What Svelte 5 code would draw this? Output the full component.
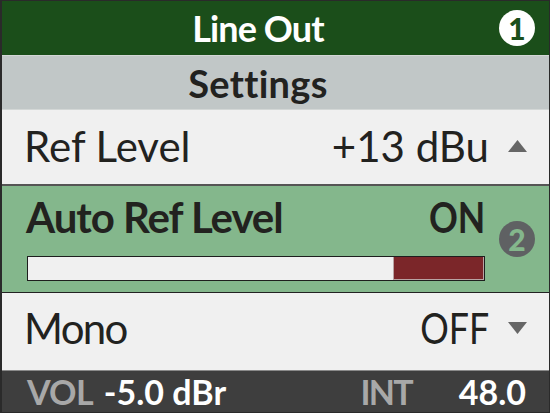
<script>
  const meterFill = 20;
</script>

<div class="screen">
  <header class="title">
    <span class="centered">Line Out</span>
    <span class="badge one">1</span>
  </header>
  <div class="section"><span class="centered">Settings</span></div>
  <div class="row plain first">
    <span>Ref Level</span>
    <span class="value">+13 dBu</span>
    <svg class="arrow" viewBox="0 0 19 12"><path d="M9.5 0 19 12H0z" /></svg>
  </div>
  <div class="row active">
    <div class="active-body">
      <div class="active-line">
        <span class="auto">Auto Ref Level</span>
        <span class="narrow">ON</span>
      </div>
      <div class="meter"><div class="fill" style="width:{meterFill}%"></div></div>
    </div>
    <span class="badge two">2</span>
  </div>
  <div class="row plain last">
    <span class="mono">Mono</span>
    <span class="value narrow">OFF</span>
    <svg class="arrow" viewBox="0 0 19 12"><path d="M0 0H19L9.5 12z" /></svg>
  </div>
  <footer class="status">
    <span class="label vol-label">VOL</span>
    <span class="num vol">-5.0 dBr</span>
    <span class="label int">INT</span>
    <span class="num">48.0</span>
  </footer>
</div>

<style>
  :global(body) {
    margin: 0;
    background: #232323;
  }
  .screen {
    box-sizing: border-box;
    width: 550px;
    height: 413px;
    padding: 1px 1px 2px 2px;
    display: flex;
    flex-direction: column;
    background: #2a2a2a;
    font-family: "Lato", "Open Sans", sans-serif;
    color: #22221f;
  }
  .title {
    height: 54px;
    flex: none;
    display: flex;
    align-items: center;
    position: relative;
    background: #1b4e1a;
    color: #fff;
    font-size: 36px;
    font-weight: 700;
    letter-spacing: -0.9px;
  }
  .centered {
    width: 512px;
    text-align: center;
  }
  .badge {
    position: absolute;
    width: 36px;
    height: 36px;
    border-radius: 50%;
    display: flex;
    align-items: center;
    justify-content: center;
    font-size: 30px;
    font-weight: 900;
    letter-spacing: 0;
  }
  .one {
    top: 9px;
    right: 14px;
    background: #fff;
    color: #1b4e1a;
  }
  .section {
    height: 55px;
    flex: none;
    box-sizing: border-box;
    border-top: 1px solid #d3d7d6;
    border-bottom: 1px solid #d3d7d6;
    display: flex;
    align-items: center;
    background: #c1c7c7;
    font-size: 38px;
    font-weight: 700;
    letter-spacing: 0.3px;
  }
  .row {
    flex: none;
    display: flex;
    align-items: center;
    box-sizing: border-box;
    padding-left: 22px;
    background: #f0f0f0;
    font-size: 42px;
  }
  .row .value {
    margin-left: auto;
    margin-right: 19px;
  }
  .narrow {
    display: inline-block;
    transform: scaleX(0.85);
    transform-origin: right center;
  }
  .auto {
    letter-spacing: -1.05px;
    margin-left: 2px;
  }
  .mono {
    letter-spacing: -1.7px;
  }
  .arrow {
    width: 19px;
    height: 12px;
    margin-right: 22px;
    fill: #666;
  }
  .first {
    height: 76px;
    border-bottom: 2px solid #555;
    padding-bottom: 3px;
  }
  .last {
    height: 79px;
    border-top: 1px solid #222;
    border-bottom: 1px solid #8a8a8a;
    padding-bottom: 7px;
  }
  .active {
    height: 106px;
    position: relative;
    background: #84b78c;
    font-weight: 700;
    align-items: flex-start;
  }
  .active-body {
    width: 461px;
  }
  .active-line {
    display: flex;
    justify-content: space-between;
    height: 62px;
    align-items: center;
  }
  .meter {
    box-sizing: border-box;
    height: 25px;
    margin-left: 3px;
    margin-top: 8px;
    border: 1px solid #1e1e1e;
    background: #f0f0f0;
    display: flex;
    justify-content: flex-end;
  }
  .fill {
    box-sizing: border-box;
    background: #7b2629;
    border-left: 1px solid #b9a3a3;
    border-right: 1px solid #b9a3a3;
    border-bottom: 1px solid #b9a3a3;
  }
  .two {
    top: 35px;
    right: 14px;
    background: #5f6163;
    color: #84b78c;
  }
  .status {
    flex: 1;
    display: flex;
    align-items: center;
    padding: 0 23px 0 25px;
    background: #3e3e3e;
    color: #fff;
    font-size: 34px;
    font-weight: 700;
    letter-spacing: 0;
  }
  .label {
    color: #a8a8a8;
  }
  .vol-label {
    letter-spacing: -0.7px;
  }
  .vol {
    margin-left: 11px;
  }
  .int {
    margin-left: auto;
    margin-right: 47px;
    letter-spacing: -1.8px;
  }
</style>
